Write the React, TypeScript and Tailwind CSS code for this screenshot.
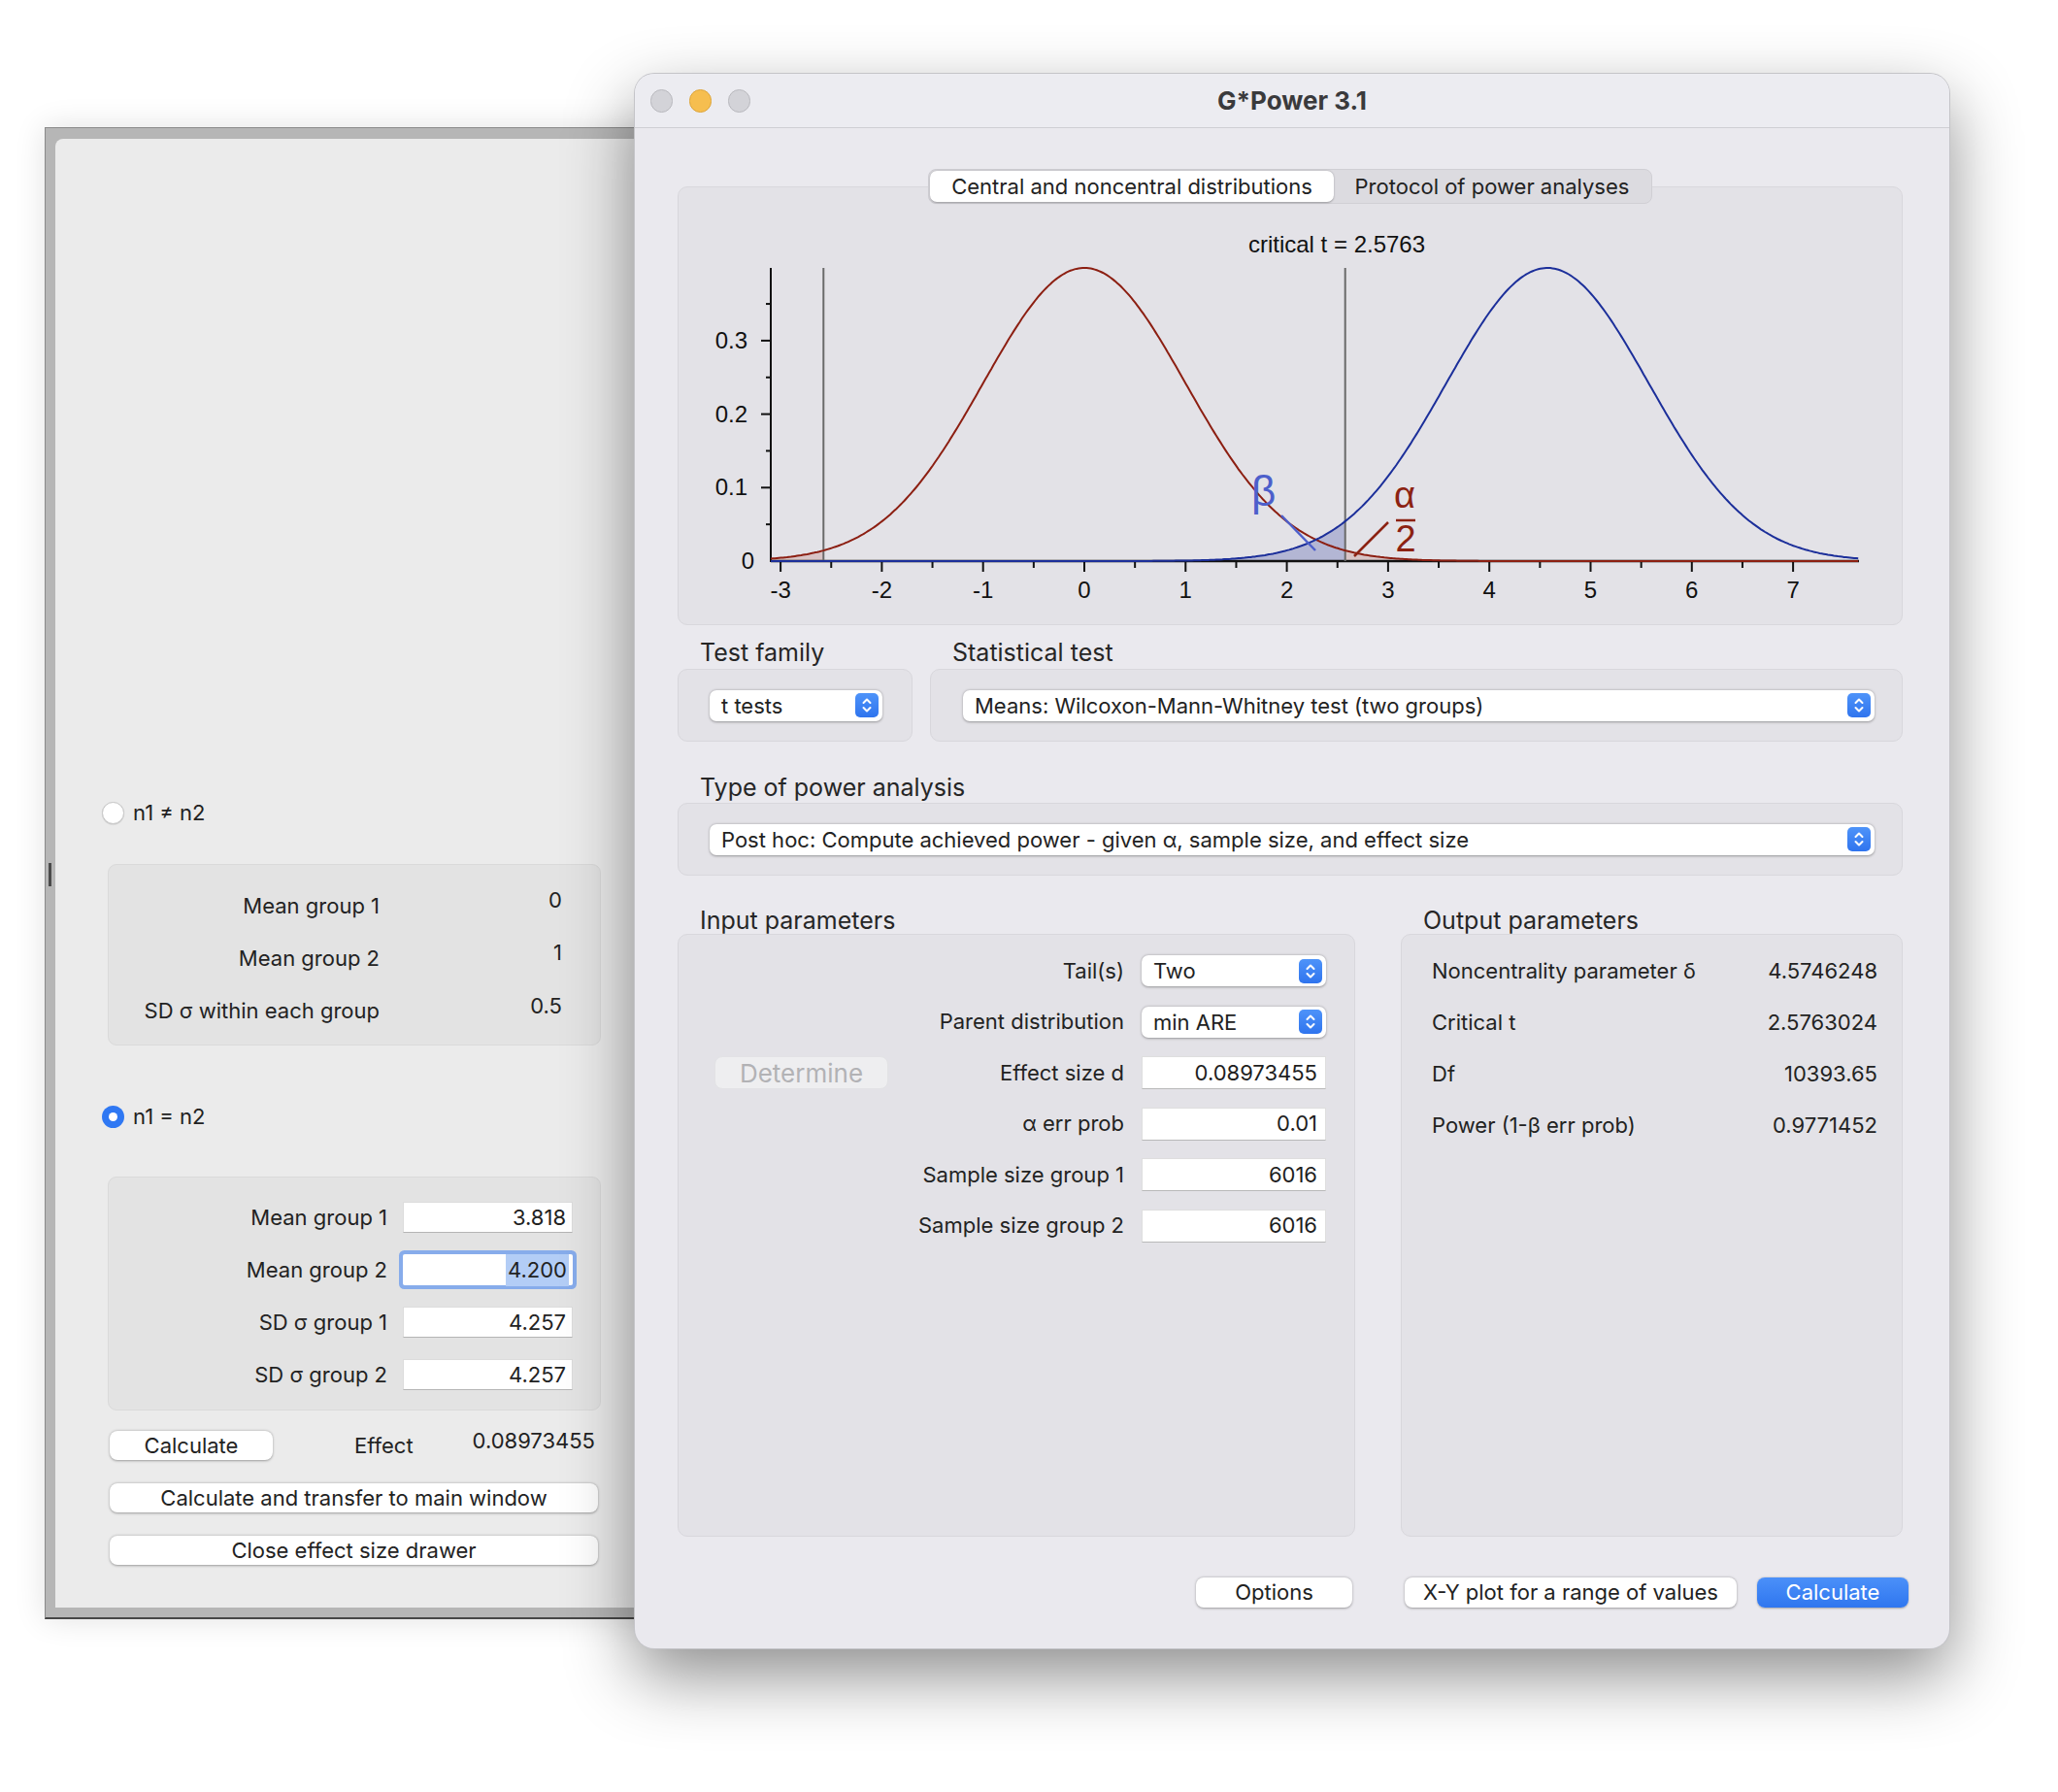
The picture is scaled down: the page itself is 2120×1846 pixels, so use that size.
import React from "react";

const CRIT = 2.5763;
const NC = 4.5746;
const VMIN = -3.097;
const VMAX = 7.65;
const X = (v: number) => 418 + 104.3 * v;
const Y = (p: number) => 385 - 757 * p;
const pdf = (x: number, m: number) => Math.exp(-0.5 * (x - m) * (x - m)) / Math.sqrt(2 * Math.PI);

function linePath(m: number) {
  let d = "";
  for (let v = VMIN; v <= VMAX + 1e-9; v += 0.02) {
    d += (d ? "L" : "M") + X(v).toFixed(1) + "," + Y(pdf(v, m)).toFixed(1);
  }
  return d;
}

function areaPath(m: number, a: number, b: number) {
  let d = `M${X(a).toFixed(1)},${Y(0)}`;
  for (let v = a; v < b; v += 0.02) d += `L${X(v).toFixed(1)},${Y(pdf(v, m)).toFixed(1)}`;
  d += `L${X(b).toFixed(1)},${Y(pdf(b, m)).toFixed(1)}L${X(b).toFixed(1)},${Y(0)}Z`;
  return d;
}

function Plot() {
  const xTicks = Array.from({ length: 11 }, (_, i) => i - 3);
  const xMinor = Array.from({ length: 10 }, (_, i) => i - 2.5);
  const top = Y(0.3989);
  const base = Y(0);
  return (
    <svg width="1261" height="452" viewBox="0 0 1261 452" className="block">
      <g fontFamily="'Liberation Sans', Arial, sans-serif" fontSize="24" fill="#111">
        <path d={areaPath(NC, VMIN, CRIT)} fill="#2a3b9e" fillOpacity="0.26" />
        <path d={areaPath(0, CRIT, VMAX)} fill="#a02a18" fillOpacity="0.16" />
        <path d={areaPath(0, VMIN, -CRIT)} fill="#a02a18" fillOpacity="0.16" />
        <line x1="95" y1={top} x2="95" y2={base + 1} stroke="#111" strokeWidth="2" />
        <line x1="95" y1={base} x2="1216" y2={base} stroke="#111" strokeWidth="2.5" />
        {[0.1, 0.2, 0.3].map((p) => (
          <line key={p} x1="85" y1={Y(p)} x2="95" y2={Y(p)} stroke="#111" strokeWidth="2" />
        ))}
        {[0.05, 0.15, 0.25, 0.35].map((p) => (
          <line key={p} x1="90" y1={Y(p)} x2="95" y2={Y(p)} stroke="#111" strokeWidth="2" />
        ))}
        {xTicks.map((t) => (
          <line key={t} x1={X(t)} y1={base + 1} x2={X(t)} y2={base + 11} stroke="#111" strokeWidth="2" />
        ))}
        {xMinor.map((t) => (
          <line key={t} x1={X(t)} y1={base + 1} x2={X(t)} y2={base + 7} stroke="#111" strokeWidth="2" />
        ))}
        {xTicks.map((t) => (
          <text key={t} x={X(t)} y={base + 38} textAnchor="middle">
            {t}
          </text>
        ))}
        <text x="71" y={Y(0.3) + 8} textAnchor="end">0.3</text>
        <text x="71" y={Y(0.2) + 8} textAnchor="end">0.2</text>
        <text x="71" y={Y(0.1) + 8} textAnchor="end">0.1</text>
        <text x="78" y={Y(0) + 8} textAnchor="end">0</text>
        <line x1={X(-CRIT)} y1={top} x2={X(-CRIT)} y2={base} stroke="#6a6a6a" strokeWidth="2" />
        <line x1={X(CRIT)} y1={top} x2={X(CRIT)} y2={base} stroke="#6a6a6a" strokeWidth="2" />
        <path d={linePath(0)} fill="none" stroke="#8c1f12" strokeWidth="2" />
        <path d={linePath(NC)} fill="none" stroke="#1c2f9a" strokeWidth="2" />
        <text x="678" y="67" textAnchor="middle">critical t = 2.5763</text>
        <text x="590" y="328" fontSize="44" fill="#4d5fcb">β</text>
        <line x1="621" y1="338" x2="656" y2="374" stroke="#4d5fcb" strokeWidth="2.5" />
        <text x="748" y="330" fontSize="38" fill="#8c2212" textAnchor="middle">α</text>
        <line x1="739" y1="343" x2="759" y2="343" stroke="#8c2212" strokeWidth="2.5" />
        <text x="749" y="375" fontSize="38" fill="#8c2212" textAnchor="middle">2</text>
        <line x1="731" y1="345" x2="696" y2="380" stroke="#8c2212" strokeWidth="2.5" />
      </g>
    </svg>
  );
}

function Stepper() {
  return (
    <div className="w-[24px] h-[25px] rounded-[5px] bg-gradient-to-b from-[#4e93f9] to-[#2f74ee] flex items-center justify-center shrink-0">
      <svg width="24" height="25" viewBox="0 0 24 25">
        <path d="M8.5 10 L12 6.5 L15.5 10" fill="none" stroke="white" strokeWidth="2" strokeLinecap="round" strokeLinejoin="round" />
        <path d="M8.5 15 L12 18.5 L15.5 15" fill="none" stroke="white" strokeWidth="2" strokeLinecap="round" strokeLinejoin="round" />
      </svg>
    </div>
  );
}

function Popup({ text, className = "" }: { text: string; className?: string }) {
  return (
    <div
      className={`h-[32px] bg-white rounded-[7px] shadow-[0_0.5px_2.5px_rgba(0,0,0,0.35)] flex items-center pl-[12px] pr-[4px] ${className}`}
    >
      <span className="flex-1 text-[22px] leading-[32px] text-[#222] whitespace-nowrap">{text}</span>
      <Stepper />
    </div>
  );
}

function Field({ value, className = "" }: { value: string; className?: string }) {
  return (
    <div
      className={`h-[34px] bg-white border border-[#dedede] border-b-[#b9b9b9] flex items-center justify-end pr-[8px] text-[22px] text-[#1e1e1e] ${className}`}
    >
      {value}
    </div>
  );
}

function Btn({ children, className = "" }: { children: React.ReactNode; className?: string }) {
  return (
    <div
      className={`bg-white rounded-[8px] shadow-[0_0.5px_2.5px_rgba(0,0,0,0.35)] flex items-center justify-center text-[22px] text-[#222] ${className}`}
    >
      {children}
    </div>
  );
}

function Drawer() {
  const dRow = "flex items-center h-[32px]";
  return (
    <div className="absolute left-[46px] top-[131px] w-[640px] h-[1537px] bg-[#b6b6b6] pl-[10px] pt-[11px] pb-[10px] border-t border-l border-[#8a8a8a] border-b-2 border-b-[#474747] shadow-[0_0_30px_rgba(0,0,0,0.12)]">
      <div className="absolute left-[3px] top-[757px] w-[3px] h-[24px] bg-[#4a4a4a]" />
      <div className="h-full bg-[#ebebeb] rounded-tl-[8px] pl-[48px] pt-[682px] flex flex-col text-[22px] text-[#222]">
        <div className="flex items-center h-[24px] gap-[9px]">
          <div className="w-[23px] h-[23px] rounded-full bg-white border border-[#c6c6c6] shadow-[0_0.5px_1px_rgba(0,0,0,0.15)]" />
          <span>n1 ≠ n2</span>
        </div>
        <div className="ml-[6px] mt-[41px] w-[508px] h-[187px] rounded-[9px] bg-[#e3e3e3] border border-[#dadada] pt-[26px] flex flex-col gap-[22px]">
          <div className={dRow}>
            <span className="w-[279px] text-right">Mean group 1</span>
            <span className="w-[188px] text-right -translate-y-[6px]">0</span>
          </div>
          <div className={dRow}>
            <span className="w-[279px] text-right">Mean group 2</span>
            <span className="w-[188px] text-right -translate-y-[6px]">1</span>
          </div>
          <div className={dRow}>
            <span className="w-[279px] text-right">SD σ within each group</span>
            <span className="w-[188px] text-right -translate-y-[5px]">0.5</span>
          </div>
        </div>
        <div className="flex items-center h-[24px] gap-[9px] mt-[61px]">
          <div className="w-[23px] h-[23px] rounded-full bg-[#2f78f3] flex items-center justify-center">
            <div className="w-[9px] h-[9px] rounded-full bg-white" />
          </div>
          <span>n1 = n2</span>
        </div>
        <div className="ml-[6px] mt-[50px] w-[508px] h-[241px] rounded-[9px] bg-[#e3e3e3] border border-[#dadada] pt-[25px] flex flex-col gap-[22px]">
          <div className={dRow}>
            <span className="w-[287px] text-right">Mean group 1</span>
            <div className="ml-[16px] w-[175px] h-[32px] bg-white border border-[#dcdcdc] border-b-[#b5b5b5] flex items-center justify-end pr-[6px]">3.818</div>
          </div>
          <div className={dRow}>
            <span className="w-[287px] text-right">Mean group 2</span>
            <div className="ml-[16px] w-[175px] h-[32px] bg-white ring-[4px] ring-[#87aceb] rounded-[2px] flex items-center justify-end pr-[4px]">
              <span className="bg-[#b3cdf6] px-[2px]">4.200</span>
            </div>
          </div>
          <div className={dRow}>
            <span className="w-[287px] text-right">SD σ group 1</span>
            <div className="ml-[16px] w-[175px] h-[32px] bg-white border border-[#dcdcdc] border-b-[#b5b5b5] flex items-center justify-end pr-[6px]">4.257</div>
          </div>
          <div className={dRow}>
            <span className="w-[287px] text-right">SD σ group 2</span>
            <div className="ml-[16px] w-[175px] h-[32px] bg-white border border-[#dcdcdc] border-b-[#b5b5b5] flex items-center justify-end pr-[6px]">4.257</div>
          </div>
        </div>
        <div className="ml-[8px] mt-[21px] w-[500px] h-[30px] flex items-center">
          <Btn className="w-[168px] h-[30px]">Calculate</Btn>
          <span className="ml-[84px]">Effect</span>
          <span className="flex-1 text-right -translate-y-[5px]">0.08973455</span>
        </div>
        <Btn className="ml-[8px] mt-[24px] w-[503px] h-[30px]">Calculate and transfer to main window</Btn>
        <Btn className="ml-[8px] mt-[24px] w-[503px] h-[30px]">Close effect size drawer</Btn>
      </div>
    </div>
  );
}

function MainWindow() {
  const label = "text-[25px] leading-[28px] text-[#262626] pl-[23px]";
  const box = "bg-[#e3e2e7] border border-[#d8d7dc] rounded-[10px]";
  const inRow = "flex items-center h-[34px] pl-[37px] pr-[29px]";
  const inLabel = "flex-1 text-right text-[22px] text-[#222] mr-[18px]";
  const outRow = "flex items-center justify-between h-[34px] pl-[31px] pr-[25px] text-[22px] text-[#222]";
  return (
    <div className="absolute left-[654px] top-[76px] w-[1354px] h-[1622px] rounded-[20px] bg-[#eae9ee] ring-1 ring-[#c4c4c8] shadow-[0_28px_70px_rgba(0,0,0,0.45)] overflow-hidden flex flex-col">
      <div className="h-[56px] shrink-0 bg-[#ececf1] border-b border-[#cfcfd3] grid grid-cols-[1fr_auto_1fr] items-center">
        <div className="flex items-center gap-[17px] pl-[16px]">
          <div className="w-[23px] h-[24px] rounded-full bg-[#d3d3d8] border border-[#b8b8bd]" />
          <div className="w-[23px] h-[24px] rounded-full bg-[#f6be4f] border border-[#dca43a]" />
          <div className="w-[23px] h-[24px] rounded-full bg-[#d3d3d8] border border-[#b8b8bd]" />
        </div>
        <div className="text-[26px] font-bold text-[#3a3a3c]">G*Power 3.1</div>
        <div />
      </div>
      <div className="flex flex-col pl-[44px] pr-[48px] pt-[42px]">
        <div className="relative z-10 flex justify-center">
          <div className="flex items-center h-[36px] bg-[#dcdbe0] rounded-[8px] border border-[#d0cfd4] p-[1px] text-[22px] text-[#222]">
            <div className="h-[32px] w-[416px] bg-white rounded-[7px] shadow-[0_0.5px_2px_rgba(0,0,0,0.3)] flex items-center justify-center">
              Central and noncentral distributions
            </div>
            <div className="h-[32px] w-[326px] flex items-center justify-center">Protocol of power analyses</div>
          </div>
        </div>
        <div className={`-mt-[18px] h-[452px] ${box} overflow-hidden`}>
          <Plot />
        </div>

        <div className="mt-[14px] flex gap-[18px]">
          <div className="w-[242px] flex flex-col">
            <div className={label}>Test family</div>
            <div className={`mt-[3px] h-[75px] ${box} flex items-center pl-[32px] pr-[30px]`}>
              <Popup text="t tests" className="w-[179px]" />
            </div>
          </div>
          <div className="flex-1 flex flex-col">
            <div className={label}>Statistical test</div>
            <div className={`mt-[3px] h-[75px] ${box} flex items-center pl-[33px] pr-[28px]`}>
              <Popup text="Means: Wilcoxon-Mann-Whitney test (two groups)" className="flex-1" />
            </div>
          </div>
        </div>

        <div className="mt-[33px] flex flex-col">
          <div className={label}>Type of power analysis</div>
          <div className={`mt-[2px] h-[75px] ${box} flex items-center pl-[32px] pr-[28px]`}>
            <Popup text="Post hoc: Compute achieved power - given α, sample size, and effect size" className="flex-1" />
          </div>
        </div>

        <div className="mt-[32px] flex gap-[47px]">
          <div className="w-[698px] flex flex-col">
            <div className={label}>Input parameters</div>
            <div className={`h-[621px] ${box} pt-[20px] flex flex-col gap-[18.6px]`}>
              <div className={inRow}>
                <div className="w-[179px]" />
                <span className={inLabel}>Tail(s)</span>
                <Popup text="Two" className="w-[190px]" />
              </div>
              <div className={inRow}>
                <div className="w-[179px]" />
                <span className={inLabel}>Parent distribution</span>
                <Popup text="min ARE" className="w-[190px]" />
              </div>
              <div className={inRow}>
                <div className="w-[179px] h-[34px] rounded-[8px] bg-[#eeeef0] border border-[#e2e2e5] flex items-center justify-center text-[26px] text-[#b2b2b5]">
                  Determine
                </div>
                <span className={inLabel}>Effect size d</span>
                <Field value="0.08973455" className="w-[190px]" />
              </div>
              <div className={inRow}>
                <div className="w-[179px]" />
                <span className={inLabel}>α err prob</span>
                <Field value="0.01" className="w-[190px]" />
              </div>
              <div className={inRow}>
                <div className="w-[179px]" />
                <span className={inLabel}>Sample size group 1</span>
                <Field value="6016" className="w-[190px]" />
              </div>
              <div className={inRow}>
                <div className="w-[179px]" />
                <span className={inLabel}>Sample size group 2</span>
                <Field value="6016" className="w-[190px]" />
              </div>
            </div>
          </div>
          <div className="flex-1 flex flex-col">
            <div className={label}>Output parameters</div>
            <div className={`h-[621px] ${box} pt-[20px] flex flex-col gap-[19px]`}>
              <div className={outRow}>
                <span>Noncentrality parameter δ</span>
                <span>4.5746248</span>
              </div>
              <div className={outRow}>
                <span>Critical t</span>
                <span>2.5763024</span>
              </div>
              <div className={outRow}>
                <span>Df</span>
                <span>10393.65</span>
              </div>
              <div className={outRow}>
                <span>Power (1-β err prob)</span>
                <span>0.9771452</span>
              </div>
            </div>
          </div>
        </div>

        <div className="mt-[42px] -mr-[6px] flex justify-end items-center">
          <Btn className="w-[161px] h-[31px]">Options</Btn>
          <Btn className="ml-[54px] w-[342px] h-[31px]">X-Y plot for a range of values</Btn>
          <div className="ml-[21px] w-[156px] h-[31px] rounded-[8px] bg-gradient-to-b from-[#4b90f9] to-[#2f76ef] shadow-[0_0.5px_2px_rgba(0,0,0,0.3)] flex items-center justify-center text-[22px] text-white">
            Calculate
          </div>
        </div>
      </div>
    </div>
  );
}

export default function App() {
  return (
    <div
      className="relative w-[2120px] h-[1846px] bg-white overflow-hidden"
      style={{ fontFamily: "Inter, 'Noto Sans', 'Liberation Sans', sans-serif" }}
    >
      <Drawer />
      <MainWindow />
    </div>
  );
}
